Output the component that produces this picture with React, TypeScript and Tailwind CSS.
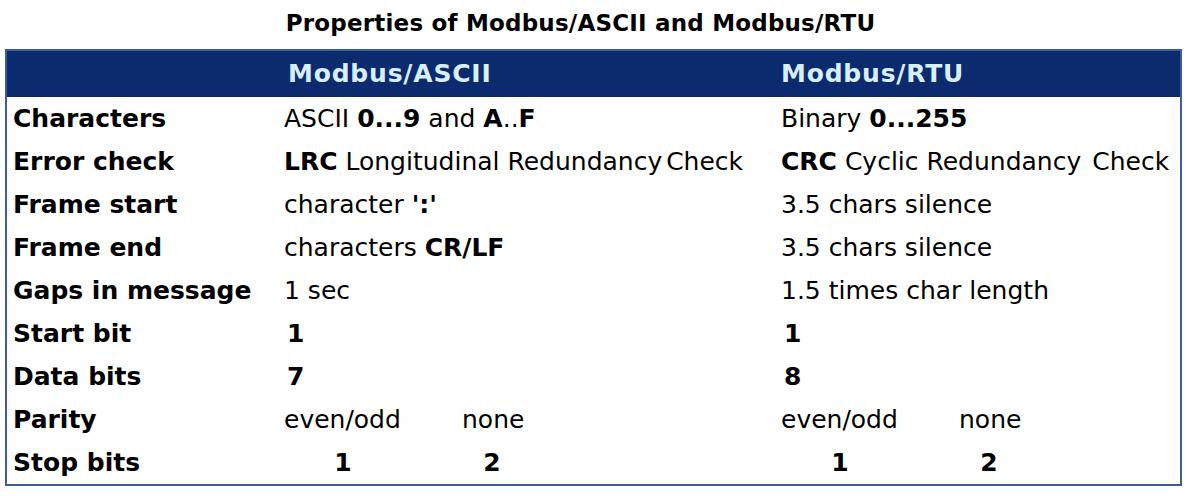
const rows: {
  label: string;
  ascii: React.ReactNode;
  rtu: React.ReactNode;
}[] = [
  {
    label: "Characters",
    ascii: (
      <>
        ASCII <b>0...9</b> and <b>A</b>..<b>F</b>
      </>
    ),
    rtu: (
      <>
        Binary <b>0...255</b>
      </>
    ),
  },
  {
    label: "Error check",
    ascii: (
      <>
        <b>LRC</b> Longitudinal Redundancy<span className="tracking-[-4px]"> </span>Check
      </>
    ),
    rtu: (
      <>
        <b>CRC</b> Cyclic Redundancy<span className="tracking-[3px]"> </span>Check
      </>
    ),
  },
  {
    label: "Frame start",
    ascii: (
      <>
        character <b>':'</b>
      </>
    ),
    rtu: "3.5 chars silence",
  },
  {
    label: "Frame end",
    ascii: (
      <>
        characters <b>CR/LF</b>
      </>
    ),
    rtu: "3.5 chars silence",
  },
  { label: "Gaps in message", ascii: "1 sec", rtu: "1.5 times char length" },
  { label: "Start bit", ascii: <b className="pl-[3px]">1</b>, rtu: <b className="pl-[3px]">1</b> },
  { label: "Data bits", ascii: <b className="pl-[3px]">7</b>, rtu: <b className="pl-[3px]">8</b> },
];

function Pair({ a, b, bold }: { a: string; b: string; bold?: boolean }) {
  return (
    <div className="flex">
      <span className={bold ? "w-[178px] font-bold" : "w-[178px]"}>
        {bold ? <span className="inline-block w-[118px] text-center">{a}</span> : a}
      </span>
      <span className={bold ? "inline-block w-[60px] text-center font-bold" : ""}>{b}</span>
    </div>
  );
}

export default function App() {
  return (
    <div className="h-[496px] w-[1187px] bg-white font-['DejaVu_Sans','Liberation_Sans',sans-serif] text-black">
      <h1 className="flex h-[49px] items-center justify-center pr-[26px] pb-[2px] text-[23px] font-bold tracking-[0.2px]">
        Properties of Modbus/ASCII and Modbus/RTU
      </h1>
      <div className="mx-[5px] border-2 border-[#3c5e94] text-[25px]">
        <div className="grid h-[46px] grid-cols-[277px_497px_1fr] items-center bg-[#0b2b6e] font-bold tracking-[0.8px] text-[#d8efff]">
          <div />
          <div className="pl-[4px]">Modbus/ASCII</div>
          <div>Modbus/RTU</div>
        </div>
        {rows.map((r) => (
          <div key={r.label} className="grid h-[43px] grid-cols-[277px_497px_1fr] items-center whitespace-nowrap">
            <div className="pl-[6px] font-bold">{r.label}</div>
            <div>{r.ascii}</div>
            <div>{r.rtu}</div>
          </div>
        ))}
        <div className="grid h-[43px] grid-cols-[277px_497px_1fr] items-center">
          <div className="pl-[6px] font-bold">Parity</div>
          <Pair a="even/odd" b="none" />
          <Pair a="even/odd" b="none" />
        </div>
        <div className="grid h-[43px] grid-cols-[277px_497px_1fr] items-center">
          <div className="pl-[6px] font-bold">Stop bits</div>
          <Pair a="1" b="2" bold />
          <Pair a="1" b="2" bold />
        </div>
      </div>
    </div>
  );
}
